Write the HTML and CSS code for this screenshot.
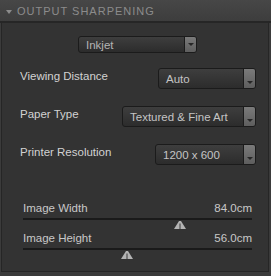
FILE: index.html
```html
<!DOCTYPE html>
<html lang="en">

<head>
    <meta charset="UTF-8">
    <meta name="viewport" content="width=device-width, initial-scale=1.0">
    <link rel="stylesheet" href="styles.css">
</head>

<body>
    <div class="header">
        <span class="caret"></span>
        <span class="title">OUTPUT SHARPENING</span>
    </div>

    <div class="panel">
        <div class="top-row">
            <div class="select select-inkjet">
                <span class="select-text">Inkjet</span>
                <span class="select-btn"><span class="arrow"></span></span>
            </div>
        </div>

        <div class="row row-view">
            <span class="label">Viewing Distance</span>
            <div class="select select-auto">
                <span class="select-text">Auto</span>
                <span class="select-btn"><span class="arrow"></span></span>
            </div>
        </div>

        <div class="row row-paper">
            <span class="label">Paper Type</span>
            <div class="select select-paper">
                <span class="select-text">Textured &amp; Fine Art</span>
                <span class="select-btn"><span class="arrow"></span></span>
            </div>
        </div>

        <div class="row row-printer">
            <span class="label">Printer Resolution</span>
            <div class="select select-printer">
                <span class="select-text">1200 x 600</span>
                <span class="select-btn"><span class="arrow"></span></span>
            </div>
        </div>

        <div class="slider slider-width">
            <div class="slider-head">
                <span>Image Width</span>
                <span>84.0cm</span>
            </div>
            <div class="track">
                <svg class="thumb" style="left: 68.6%;" width="12" height="8" viewBox="0 0 12 8">
                    <polygon points="5,0 7,0 12,8 0,8" fill="#b4b4b4" />
                    <line x1="6" y1="2.5" x2="6" y2="8" stroke="#3a3a3a" stroke-width="1" />
                </svg>
            </div>
        </div>

        <div class="slider slider-height">
            <div class="slider-head">
                <span>Image Height</span>
                <span>56.0cm</span>
            </div>
            <div class="track">
                <svg class="thumb" style="left: 45.4%;" width="12" height="8" viewBox="0 0 12 8">
                    <polygon points="5,0 7,0 12,8 0,8" fill="#b4b4b4" />
                    <line x1="6" y1="2.5" x2="6" y2="8" stroke="#3a3a3a" stroke-width="1" />
                </svg>
            </div>
        </div>
    </div>
</body>

</html>
```
FILE: styles.css
```css
body {
    margin: 0;
    width: 271px;
    height: 276px;
    background-color: #3b3b3b;
    font-family: "Liberation Sans", Arial, sans-serif;
    overflow: hidden;
}

.header {
    display: flex;
    align-items: center;
    height: 23px;
    padding-left: 6px;
    background: linear-gradient(#474747, #3d3d3d);
    border-bottom: 2px solid #262626;
    box-sizing: border-box;
}

.caret {
    width: 0;
    height: 0;
    border-left: 3px solid transparent;
    border-right: 3px solid transparent;
    border-top: 4px solid #8c8c8c;
    margin-top: 2px;
}

.title {
    margin-left: 5px;
    font-size: 11px;
    letter-spacing: 1px;
    color: #8c8c8c;
}

.panel {
    display: flex;
    flex-direction: column;
    width: 268px;
    height: 249px;
    margin-left: 1px;
    background-color: #333333;
    border: 1px solid #262626;
    border-top: none;
    box-sizing: border-box;
}

.top-row {
    display: flex;
    margin-top: 13px;
    padding-left: 76px;
}

.row {
    display: flex;
    justify-content: space-between;
    padding: 0 12px 0 18px;
}

.row-view {
    margin-top: 15px;
}

.row-paper {
    margin-top: 17px;
}

.row-printer {
    margin-top: 17px;
}

.label {
    font-size: 11.5px;
    color: #d2d2d2;
    margin-top: 2px;
}

.select {
    display: flex;
    align-items: center;
    height: 21px;
    background: linear-gradient(#3e3e3e, #2c2c2c);
    border: 1px solid #1b1b1b;
    border-radius: 3px;
    box-sizing: border-box;
    overflow: hidden;
}

.select-inkjet {
    width: 119px;
    height: 17px;
}

.select-auto {
    width: 98px;
}

.select-paper {
    width: 134px;
}

.select-printer {
    width: 101px;
}

.select-text {
    flex: 1;
    padding-left: 7px;
    font-size: 11.5px;
    color: #c4c4c4;
    white-space: nowrap;
}

.select-inkjet .select-text {
    color: #b4b4b4;
}

.select-btn {
    display: flex;
    justify-content: center;
    align-items: flex-end;
    align-self: stretch;
    width: 12px;
    padding-bottom: 4px;
    background: linear-gradient(#7a7a7a, #5e5e5e);
    border-left: 1px solid #1b1b1b;
    box-sizing: border-box;
}

.select-inkjet .select-btn {
    align-items: center;
    padding-bottom: 0;
}

.arrow {
    width: 0;
    height: 0;
    border-left: 3px solid transparent;
    border-right: 3px solid transparent;
    border-top: 3px solid #262626;
}

.slider {
    display: flex;
    flex-direction: column;
    padding: 0 16px 0 21px;
}

.slider-width {
    margin-top: 36px;
}

.slider-height {
    margin-top: 2px;
}

.slider-head {
    display: flex;
    justify-content: space-between;
    font-size: 11.5px;
    line-height: 14px;
    color: #c8c8c8;
}

.track {
    position: relative;
    height: 11px;
    margin-top: 3px;
    border-top: 2px solid #1a1a1a;
    box-sizing: border-box;
}

.thumb {
    position: absolute;
    top: 1px;
    margin-left: -6px;
}
```
